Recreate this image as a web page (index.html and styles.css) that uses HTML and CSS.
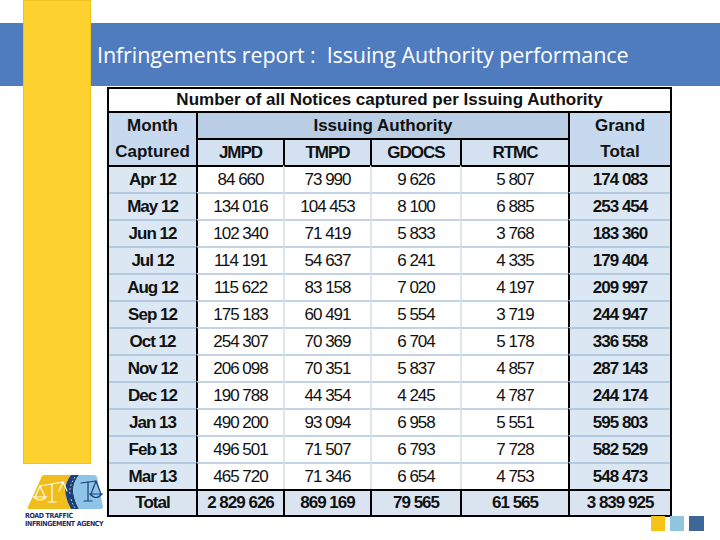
FILE: index.html
```html
<!DOCTYPE html>
<html>
<head>
<meta charset="utf-8">
<link rel="stylesheet" href="styles.css">
</head>
<body>
<div class="slide">
  <div class="titlebar"><h1 class="title">Infringements report :&nbsp; Issuing Authority performance</h1></div>
  <div class="accent-bar"></div>
  <div class="content">
    <div class="side">
      <svg class="logo" width="78" height="36" viewBox="0 0 78 36">
        <path d="M16,2 Q17,1 19,1 L45,1 C40,8 38,14 40,22 C41,27 43,31 45,35 L3,35 Q1,35 2,33 Z" fill="#f0bd1c"/>
        <path d="M45,1 L53,1 C48,8 46,14 48,22 C49,27 51,31 53,35 L45,35 C43,31 41,27 40,22 C38,14 40,8 45,1 Z" fill="#1d3f78"/>
        <path d="M49,3 C45,9 43,15 44,21 M45,25 C46,29 47,31 49,34" stroke="#f4e6a8" stroke-width="0.8" stroke-dasharray="2 2" fill="none"/>
        <path d="M53,1 L68,1 Q70,1 71,3 L77,33 Q77,35 75,35 L53,35 C51,31 49,27 48,22 C46,14 48,8 53,1 Z" fill="#8ec4e8"/>
        <g stroke="#ffffff" stroke-width="1.2" fill="none" stroke-linecap="round">
          <path d="M14,12 L37,8"/>
          <path d="M26,10 L26,28 M22,28 L30,28"/>
          <path d="M14,12 L9,23 M14,12 L19,23"/>
          <path d="M8,23 Q14,29 20,23 Z"/>
          <path d="M37,8 L33,17 M37,8 L41,17"/>
        </g>
        <g stroke="#1d3f78" stroke-width="1.2" fill="none" stroke-linecap="round">
          <path d="M55,9 L70,7"/>
          <path d="M62,8 L62,27 M58,27 L66,27"/>
          <path d="M70,7 L65,20 M70,7 L75,20"/>
          <path d="M64,20 Q70,27 76,20 Z"/>
        </g>
      </svg>
      <div class="logo-name">ROAD TRAFFIC</div>
      <div class="logo-name">INFRINGEMENT AGENCY</div>
    </div>
    <div class="main">
      <div class="frame">
        <table class="report">
          <colgroup>
            <col class="w-month"><col class="w-a"><col class="w-a"><col class="w-b"><col class="w-c"><col class="w-d">
          </colgroup>
          <tr><th colspan="6" class="caption-cell">Number of all Notices captured per Issuing Authority</th></tr>
          <tr>
            <th rowspan="2" class="hd side-hd">Month<br>Captured</th>
            <th colspan="4" class="hd group-hd">Issuing Authority</th>
            <th rowspan="2" class="hd side-hd dark-l">Grand<br>Total</th>
          </tr>
          <tr>
            <th class="hd sub-hd">JMPD</th><th class="hd sub-hd">TMPD</th><th class="hd sub-hd">GDOCS</th><th class="hd sub-hd">RTMC</th>
          </tr>
          <tr class="first"><th class="month">Apr 12</th><td class="dark-l">84 660</td><td>73 990</td><td>9 626</td><td>5 807</td><td class="grand">174 083</td></tr>
          <tr><th class="month">May 12</th><td class="dark-l">134 016</td><td>104 453</td><td>8 100</td><td>6 885</td><td class="grand">253 454</td></tr>
          <tr><th class="month">Jun 12</th><td class="dark-l">102 340</td><td>71 419</td><td>5 833</td><td>3 768</td><td class="grand">183 360</td></tr>
          <tr><th class="month">Jul 12</th><td class="dark-l">114 191</td><td>54 637</td><td>6 241</td><td>4 335</td><td class="grand">179 404</td></tr>
          <tr><th class="month">Aug 12</th><td class="dark-l">115 622</td><td>83 158</td><td>7 020</td><td>4 197</td><td class="grand">209 997</td></tr>
          <tr><th class="month">Sep 12</th><td class="dark-l">175 183</td><td>60 491</td><td>5 554</td><td>3 719</td><td class="grand">244 947</td></tr>
          <tr><th class="month">Oct 12</th><td class="dark-l">254 307</td><td>70 369</td><td>6 704</td><td>5 178</td><td class="grand">336 558</td></tr>
          <tr><th class="month">Nov 12</th><td class="dark-l">206 098</td><td>70 351</td><td>5 837</td><td>4 857</td><td class="grand">287 143</td></tr>
          <tr><th class="month">Dec 12</th><td class="dark-l">190 788</td><td>44 354</td><td>4 245</td><td>4 787</td><td class="grand">244 174</td></tr>
          <tr><th class="month">Jan 13</th><td class="dark-l">490 200</td><td>93 094</td><td>6 958</td><td>5 551</td><td class="grand">595 803</td></tr>
          <tr><th class="month">Feb 13</th><td class="dark-l">496 501</td><td>71 507</td><td>6 793</td><td>7 728</td><td class="grand">582 529</td></tr>
          <tr><th class="month">Mar 13</th><td class="dark-l">465 720</td><td>71 346</td><td>6 654</td><td>4 753</td><td class="grand">548 473</td></tr>
          <tr class="total"><th class="month">Total</th><td>2 829 626</td><td>869 169</td><td>79 565</td><td>61 565</td><td>3 839 925</td></tr>
        </table>
      </div>
      <div class="squares">
        <span class="sq sq-yellow"></span><span class="sq sq-light"></span><span class="sq sq-dark"></span>
      </div>
    </div>
  </div>
</div>
</body>
</html>
```

FILE: styles.css
```css
* { box-sizing: border-box; }
html, body { margin: 0; padding: 0; background: #ffffff; }
.slide {
  position: relative;
  width: 720px;
  height: 540px;
  overflow: hidden;
  background: #ffffff;
  font-family: "Liberation Sans", Arial, sans-serif;
}
.titlebar {
  margin-top: 23px;
  height: 63px;
  background: #4f7bbf;
  display: flex;
  align-items: center;
  padding-left: 97px;
}
.title {
  margin: 0;
  color: #ffffff;
  font-family: "Open Sans", sans-serif;
  font-weight: 500;
  font-size: 21.5px;
  letter-spacing: -0.1px;
  white-space: nowrap;
}
.accent-bar {
  position: absolute;
  left: 23px;
  top: 0;
  width: 68px;
  height: 464px;
  background: #fed22e;
  border: 1px solid #efc21c;
}
.content {
  display: flex;
  height: 454px;
}
.side {
  width: 107px;
  display: flex;
  flex-direction: column;
  justify-content: flex-end;
  padding-left: 24px;
  padding-bottom: 12px;
}
.logo { display: block; margin-left: 2px; margin-bottom: 2px; }
.logo-name {
  font-family: "DejaVu Sans Condensed", "DejaVu Sans", sans-serif;
  font-weight: 700;
  font-size: 7px;
  line-height: 8px;
  letter-spacing: -0.35px;
  color: #1f2d66;
  white-space: nowrap;
  padding-left: 1px;
}
.main {
  display: flex;
  flex-direction: column;
  margin-top: 1px;
}
.frame {
  width: 565px;
  border: 2px solid #000000;
}
.report {
  width: 561px;
  table-layout: fixed;
  border-collapse: separate;
  border-spacing: 0;
  color: #111111;
  font-size: 17px;
}
.w-month { width: 87px; }
.w-a { width: 87px; }
.w-b { width: 90px; }
.w-c { width: 108px; }
.w-d { width: 102px; }
.report th, .report td {
  padding: 0;
  text-align: center;
  vertical-align: middle;
  white-space: nowrap;
  line-height: 25px;
  border-top: 2px solid #c3d3e6;
  border-left: 2px solid #dde5ef;
  letter-spacing: -1px;
  font-weight: 400;
}
.report .caption-cell {
  border: none;
  line-height: 22px;
  font-weight: 700;
  letter-spacing: 0;
  background: #ffffff;
}
.report .hd {
  font-weight: 700;
  border-top: 2px solid #000000;
  border-left: 2px solid #000000;
}
.report .side-hd {
  background: #c6d9ef;
  line-height: 26px;
  letter-spacing: 0;
}
.report tr > .side-hd:first-child { border-left: none; }
.report .group-hd {
  background: #b9cde5;
  letter-spacing: 0;
}
.report .sub-hd {
  background: #d4e1f0;
}
.report .month {
  border-left: none;
  font-weight: 700;
  background: #dbe8f4;
  border-top-color: #b3c9e0;
}
.report .grand {
  font-weight: 700;
  background: #dbe8f4;
  border-top-color: #b3c9e0;
  border-left: 2px solid #000000;
}
.report .dark-l { border-left: 2px solid #000000; }
.report tr.first > th, .report tr.first > td { border-top: 2px solid #000000; }
.report tr.total > th, .report tr.total > td {
  border-top: 2px solid #000000;
  background: #dae4f0;
  font-weight: 700;
  line-height: 24px;
}
.report tr.total > td { border-left: 2px solid #000000; }
.squares {
  display: flex;
  justify-content: flex-end;
  gap: 5px;
  margin-right: -32px;
  margin-top: -1px;
}
.sq { width: 14px; height: 15px; display: block; }
.sq-yellow { background: #f5c418; }
.sq-light { background: #92c6de; }
.sq-dark { background: #3d6699; width: 15px; }
```
